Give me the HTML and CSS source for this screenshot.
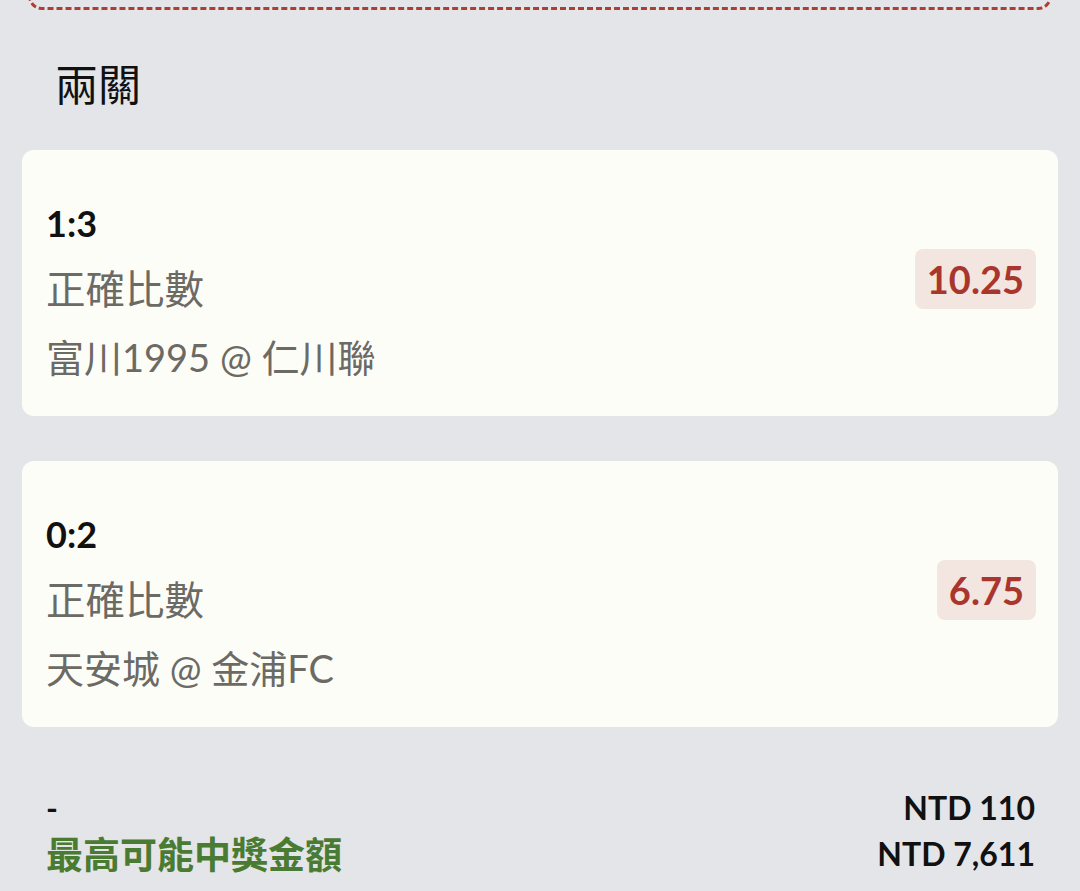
FILE: index.html
```html
<!DOCTYPE html>
<html lang="zh-Hant">
<head>
    <meta charset="UTF-8">
    <meta name="viewport" content="width=device-width, initial-scale=1.0">
    <title>兩關</title>
    <link rel="stylesheet" href="styles.css">
</head>
<body>
    <div class="slip-edge"></div>

    <h2 class="section-title">兩關</h2>

    <div class="leg-list">
        <div class="leg-card">
            <div class="leg-info">
                <div class="leg-pick">1:3</div>
                <div class="leg-market">正確比數</div>
                <div class="leg-match">富川1995 @ 仁川聯</div>
            </div>
            <div class="leg-odds">10.25</div>
        </div>

        <div class="leg-card">
            <div class="leg-info">
                <div class="leg-pick">0:2</div>
                <div class="leg-market">正確比數</div>
                <div class="leg-match">天安城 @ 金浦FC</div>
            </div>
            <div class="leg-odds">6.75</div>
        </div>
    </div>

    <div class="summary">
        <div class="summary-row">
            <span class="summary-label">-</span>
            <span class="summary-value">NTD 110</span>
        </div>
        <div class="summary-row">
            <span class="summary-label payout">最高可能中獎金額</span>
            <span class="summary-value">NTD 7,611</span>
        </div>
    </div>
</body>
</html>
```

FILE: styles.css
```css
:root {
    --bg-color: #e4e5e8;
    --card-bg: #fdfdf7;
    --text-dark: #111;
    --text-muted: #6b6a65;
    --odds-color: #a8362c;
    --odds-bg: #f3e5e0;
    --win-color: #4a7b32;
}

* {
    margin: 0;
    padding: 0;
    box-sizing: border-box;
}

body {
    background-color: var(--bg-color);
    color: var(--text-dark);
    font-family: Lato, "Noto Sans CJK TC", sans-serif;
    min-height: 100vh;
    overflow: hidden;
}

.slip-edge {
    height: 48px;
    margin: -38px 28px 0;
    border: 3px dashed #b03c36;
    border-radius: 14px;
}

.section-title {
    font-size: 43px;
    font-weight: 400;
    line-height: 80px;
    margin-top: 35px;
    padding-left: 55px;
    margin-bottom: 25px;
}

.leg-list {
    display: flex;
    flex-direction: column;
    gap: 45px;
    padding: 0 22px;
}

.leg-card {
    background-color: var(--card-bg);
    border-radius: 12px;
    display: flex;
    align-items: center;
    justify-content: space-between;
    padding: 41px 22px 25px 24px;
}

.leg-pick {
    font-size: 36px;
    font-weight: 700;
    line-height: 64px;
}

.leg-market,
.leg-match {
    font-size: 38px;
    line-height: 68px;
    color: var(--text-muted);
}

.leg-market {
    font-size: 39.5px;
}

.leg-odds {
    background-color: var(--odds-bg);
    color: var(--odds-color);
    font-size: 38px;
    font-weight: 700;
    line-height: 60px;
    padding: 0 12px;
    border-radius: 8px;
    margin-top: -24px;
}

.summary {
    padding: 57px 45px 0 46px;
}

.summary-row {
    display: flex;
    justify-content: space-between;
    align-items: center;
    height: 46px;
}

.summary-label {
    font-size: 32px;
    font-weight: 700;
}

.summary-label.payout {
    color: var(--win-color);
    font-size: 37px;
}

.summary-value {
    font-size: 32px;
    font-weight: 700;
}
```
